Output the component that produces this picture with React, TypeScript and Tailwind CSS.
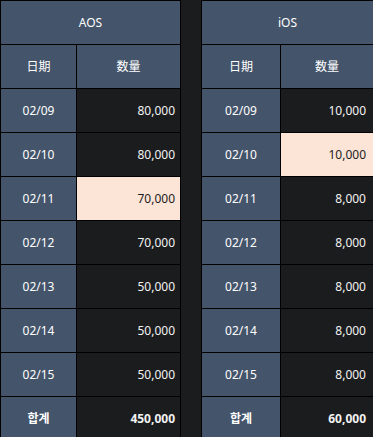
import React from "react";

type Row = { d: string; v: string; hl?: boolean };

const aos: Row[] = [
  { d: "02/09", v: "80,000" },
  { d: "02/10", v: "80,000" },
  { d: "02/11", v: "70,000", hl: true },
  { d: "02/12", v: "70,000" },
  { d: "02/13", v: "50,000" },
  { d: "02/14", v: "50,000" },
  { d: "02/15", v: "50,000" },
];
const ios: Row[] = [
  { d: "02/09", v: "10,000" },
  { d: "02/10", v: "10,000", hl: true },
  { d: "02/11", v: "8,000" },
  { d: "02/12", v: "8,000" },
  { d: "02/13", v: "8,000" },
  { d: "02/14", v: "8,000" },
  { d: "02/15", v: "8,000" },
];

function Table({ title, rows, total, cols, pr }: { title: string; rows: Row[]; total: string; cols: string; pr: string }) {
  const hdr = "bg-[#44546a] text-white flex items-center justify-center h-[43px]";
  return (
    <div className={`grid ${cols} auto-rows-[43px] gap-px bg-black p-px shrink-0`}>
      <div className={`${hdr} col-span-2`}>{title}</div>
      <div className={hdr}>日期</div>
      <div className={hdr}>数量</div>
      {rows.map((r) => (
        <React.Fragment key={r.d}>
          <div className={hdr}>{r.d}</div>
          <div
            className={`flex items-center justify-end ${pr} ${
              r.hl ? "bg-[#fce4d6] text-[#1b1c1e]" : "bg-[#1b1c1e] text-[#f2f2f2]"
            }`}
          >
            {r.v}
          </div>
        </React.Fragment>
      ))}
      <div className={`${hdr} font-bold`}>합계</div>
      <div className={`flex items-center justify-end ${pr} bg-[#1b1c1e] text-[#f2f2f2] font-bold`}>{total}</div>
    </div>
  );
}

export default function App() {
  return (
    <div
      className="w-[373px] h-[437px] overflow-hidden bg-[#1b1c1e] flex gap-[20px] text-[12px]"
      style={{ fontFamily: '"Noto Sans", "Noto Sans CJK KR", sans-serif' }}
    >
      <Table title="AOS" rows={aos} total="450,000" cols="grid-cols-[75px_103px]" pr="pr-[5px]" />
      <Table title="iOS" rows={ios} total="60,000" cols="grid-cols-[78px_92px]" pr="pr-[7px]" />
    </div>
  );
}
